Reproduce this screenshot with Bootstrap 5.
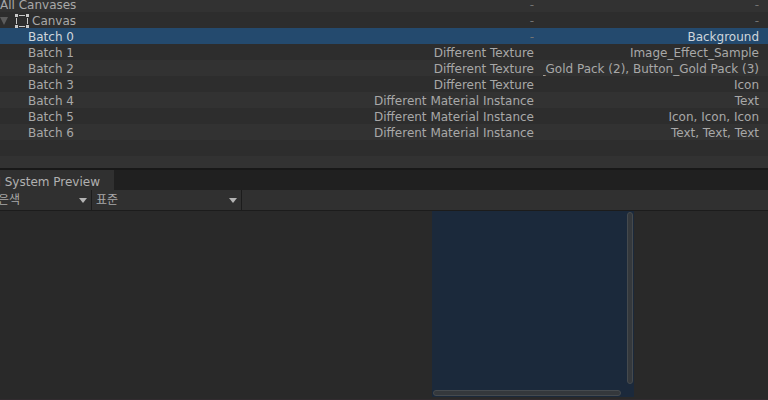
<!DOCTYPE html>
<html lang="ko">
<head>
<meta charset="utf-8">
<meta name="viewport" content="width=device-width, initial-scale=1">
<title>UI Profiler</title>
<link href="https://cdn.jsdelivr.net/npm/bootstrap@5.3.0/dist/css/bootstrap.min.css" rel="stylesheet">
<style>
  body { background: #292929; color: #a8a8a8; font: 12px/16px "DejaVu Sans", "Noto Sans CJK KR", sans-serif; }
  .batch-pane { flex: 0 0 170px; background: #303030; border-bottom: 2px solid #181818; }
  .batch-table { table-layout: fixed; margin-top: -4px; line-height: 14px; }
  .batch-table th, .batch-table td { height: 16px; padding: 2px 0 0; font-weight: 400; white-space: nowrap; }
  .batch-table tr { background: #323232; }
  .batch-table tr:nth-child(even) { background: #2d2d2d; }
  .batch-table tr.selected { background: #244a6e; color: #cfd6dc; }
  .col-reason { width: 180px; }
  .col-objects { width: 225px; }
  .batch-table td { padding-right: 9px; }
  .batch-table td.none { color: #737373; }
  .batch-table th.batch { padding-left: 28px; }
  .batch-table th.group { padding-top: 1px; }
  .group-name { padding: 1px 0 0 3px; }
  .fold { width: 15px; }
  .tab-strip { flex: 0 0 20px; background: #202020; }
  .preview-tab { width: 114px; height: 20px; padding: 2px 14px 0 0; border: 0; background: #303030; color: #b0b0b0; line-height: 20px; }
  .tool-strip { flex: 0 0 21px; background: #303030; border-bottom: 1px solid #1c1c1c; }
  .drop { height: 20px; padding: 0 20px 0 4px; border: 0; border-right: 1px solid #1c1c1c; border-radius: 0; color: #a8a8a8; appearance: none; outline: 0;
    background: #303030 url("data:image/svg+xml,%3Csvg xmlns='http://www.w3.org/2000/svg' width='8' height='5'%3E%3Cpath d='M0 0h8L4 5z' fill='%23b4b4b4'/%3E%3C/svg%3E") no-repeat right 4px top 8px; }
  .drop-color { width: 92px; padding-left: 0; text-indent: -2px; }
  .drop-mode { width: 150px; }
  .preview-area { padding: 0 134px 2px 0; border-bottom: 1px solid #312b2f; }
  .preview-view { display: grid; grid-template: 1fr 12px / 1fr 7px; width: 202px; padding: 1px 0 0 1px; background: #1b293b; }
  .thumb { background: #34383c; border: 1px solid #454a4e; border-radius: 3px; }
  .thumb-v { grid-column: 2; width: 6px; margin-bottom: 1px; }
  .thumb-h { grid-row: 2; height: 6px; margin: 5px 6px 0 0; }
</style>
<script src="https://cdn.jsdelivr.net/npm/bootstrap@5.3.0/dist/js/bootstrap.bundle.min.js"></script>
</head>
<body class="vh-100 d-flex flex-column overflow-hidden">
<section class="batch-pane overflow-hidden">
  <table class="batch-table w-100">
    <colgroup><col><col class="col-reason"><col class="col-objects"></colgroup>
    <tbody>
      <tr><th scope="row">All Canvases</th><td class="none text-end">-</td><td class="none text-end">-</td></tr>
      <tr>
        <th class="group" scope="row"><div class="d-flex align-items-center">
          <svg class="fold" width="15" height="8" viewBox="0 0 15 8" aria-hidden="true"><path d="M0 0h8L4 8z" fill="#5c5c5c"/></svg>
          <svg width="14" height="14" viewBox="0 0 14 14" aria-hidden="true"><path d="M0 0h3v3H0zM11 0h3v3h-3zM0 11h3v3H0zM11 11h3v3h-3zM4 1h6v1H4zM4 12h6v1H4zM1 4h1v6H1zM12 4h1v6h-1z" fill="#c8c8c8"/></svg>
          <span class="group-name">Canvas</span></div></th>
        <td class="none text-end">-</td><td class="none text-end">-</td></tr>
      <tr class="selected"><th class="batch" scope="row">Batch 0</th><td class="none text-end">-</td><td class="text-end">Background</td></tr>
      <tr><th class="batch" scope="row">Batch 1</th><td class="text-end">Different Texture</td><td class="text-end">Image_Effect_Sample</td></tr>
      <tr><th class="batch" scope="row">Batch 2</th><td class="text-end">Different Texture</td><td><div class="d-flex justify-content-end overflow-hidden"><span class="flex-shrink-0">_Gold Pack (2), Button_Gold Pack (3)</span></div></td></tr>
      <tr><th class="batch" scope="row">Batch 3</th><td class="text-end">Different Texture</td><td class="text-end">Icon</td></tr>
      <tr><th class="batch" scope="row">Batch 4</th><td class="text-end">Different Material Instance</td><td class="text-end">Text</td></tr>
      <tr><th class="batch" scope="row">Batch 5</th><td class="text-end">Different Material Instance</td><td class="text-end">Icon, Icon, Icon</td></tr>
      <tr><th class="batch" scope="row">Batch 6</th><td class="text-end">Different Material Instance</td><td class="text-end">Text, Text, Text</td></tr>
      <tr><td colspan="3"></td></tr>
      <tr><td colspan="3"></td></tr>
    </tbody>
  </table>
</section>
<div class="tab-strip d-flex">
  <button type="button" class="preview-tab d-flex justify-content-end overflow-hidden text-nowrap"><span class="flex-shrink-0">UI System Preview</span></button>
</div>
<div class="tool-strip d-flex">
  <select class="drop drop-color" aria-label="배경색"><option>은색</option></select>
  <select class="drop drop-mode" aria-label="보기 모드"><option>표준</option></select>
</div>
<main class="preview-area flex-grow-1 d-flex justify-content-end">
  <div class="preview-view">
    <div class="thumb thumb-v"></div>
    <div class="thumb thumb-h"></div>
  </div>
</main>
</body>
</html>
